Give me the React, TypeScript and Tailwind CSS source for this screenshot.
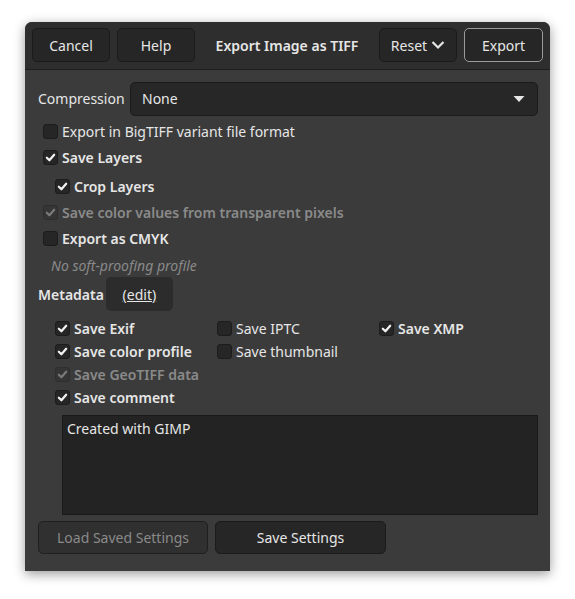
import React from "react";

const font = { fontFamily: '"Noto Sans", "Open Sans", sans-serif' };

function Check({ checked, disabled }: { checked?: boolean; disabled?: boolean }) {
  return (
    <div
      className={`w-[15px] h-[15px] rounded-[3px] border flex items-center justify-center shrink-0 ${
        disabled ? "bg-[#353535] border-[#2e2e2e]" : "bg-[#262626] border-[#1c1c1c]"
      }`}
    >
      {checked && (
        <svg width="11" height="11" viewBox="0 0 12 12">
          <path
            d="M2 6.2 L4.8 9 L10 3"
            fill="none"
            stroke={disabled ? "#7a7a7a" : "#f2f2f2"}
            strokeWidth="2.4"
            strokeLinecap="round"
            strokeLinejoin="round"
          />
        </svg>
      )}
    </div>
  );
}

function Row({
  label,
  checked,
  disabled,
  bold,
  className = "",
}: {
  label: string;
  checked?: boolean;
  disabled?: boolean;
  bold?: boolean;
  className?: string;
}) {
  return (
    <div className={`h-[23px] flex items-center gap-[4px] ${className}`}>
      <Check checked={checked} disabled={disabled} />
      <span
        className={`text-[14px] leading-none ${bold ? "font-semibold" : ""} ${
          disabled ? "text-[#8a8a8a]" : "text-[#e6e6e6]"
        }`}
      >
        {label}
      </span>
    </div>
  );
}

export default function App() {
  return (
    <div className="w-[575px] h-[599px] bg-white relative" style={font}>
      <div className="absolute left-[25px] top-[22px] w-[525px] h-[549px] rounded-t-[7px] bg-[#3b3b3b] shadow-[0_3px_12px_rgba(0,0,0,0.4)] flex flex-col overflow-hidden">
        {/* header */}
        <div className="h-[48px] bg-[#2e2e2e] border-b border-[#1f1f1f] flex items-center px-[7px] pb-[1px] shrink-0">
          <button className="w-[78px] h-[34px] rounded-[5px] bg-[#262626] border border-[#1b1b1b] text-[14px] text-[#e6e6e6]">
            Cancel
          </button>
          <button className="ml-[7px] w-[78px] h-[34px] rounded-[5px] bg-[#262626] border border-[#1b1b1b] text-[14px] text-[#e6e6e6]">
            Help
          </button>
          <div className="flex-1 text-center text-[14px] font-semibold text-[#e6e6e6]">Export Image as TIFF</div>
          <button className="w-[78px] h-[34px] rounded-[5px] bg-[#262626] border border-[#1b1b1b] text-[14px] text-[#e6e6e6] flex items-center justify-center gap-[4px]">
            Reset
            <svg width="14" height="10" viewBox="0 0 14 10">
              <path d="M1.5 2 L7 7.5 L12.5 2" fill="none" stroke="#e6e6e6" strokeWidth="2.2" />
            </svg>
          </button>
          <button className="ml-[7px] w-[79px] h-[34px] rounded-[5px] bg-[#262626] border border-[#9a9a9a] text-[14px] text-[#e6e6e6]">
            Export
          </button>
        </div>

        {/* body */}
        <div className="flex flex-col pl-[13px] pr-[12px] pt-[12px] text-[#e6e6e6]">
          <div className="flex items-center h-[34px]">
            <span className="text-[14px] w-[92px] -mt-[2px]">Compression</span>
            <div className="flex-1 h-[34px] rounded-[5px] bg-[#272727] border border-[#1b1b1b] flex items-center justify-between pl-[11px] pr-[12px]">
              <span className="text-[14px] -mt-[2px]">None</span>
              <svg width="12" height="8" viewBox="0 0 12 8">
                <path d="M0.5 1 L11.5 1 L6 7 Z" fill="#e6e6e6" />
              </svg>
            </div>
          </div>

          <div className="pl-[5px] mt-[4px] flex flex-col">
            <Row label="Export in BigTIFF variant file format" />
            <Row label="Save Layers" checked bold className="mt-[3px]" />
            <Row label="Crop Layers" checked bold className="mt-[6px] ml-[12px]" />
            <Row label="Save color values from transparent pixels" checked disabled bold className="mt-[3px]" />
            <Row label="Export as CMYK" bold className="mt-[3px]" />
            <div className="h-[23px] mt-[4px] flex items-center pl-[8px] text-[14px] italic text-[#8a8a8a]">
              No soft-proofing profile
            </div>
          </div>

          <div className="flex items-center h-[34px]">
            <span className="text-[14px] font-semibold">Metadata</span>
            <div className="ml-[2px] w-[67px] h-[34px] rounded-[5px] bg-[#2c2c2c] flex items-center justify-center text-[14px] underline">
              (edit)
            </div>
          </div>

          <div className="pl-[17px] mt-[6px] grid grid-cols-[162px_162px_1fr]">
            <Row label="Save Exif" checked bold />
            <Row label="Save IPTC" />
            <Row label="Save XMP" checked bold />
            <Row label="Save color profile" checked bold />
            <Row label="Save thumbnail" />
            <div />
            <Row label="Save GeoTIFF data" checked disabled bold />
            <div />
            <div />
            <Row label="Save comment" checked bold />
          </div>

          <div className="ml-[24px] mt-[6px] h-[100px] bg-[#232323] border border-[#1a1a1a] px-[4px] pt-[2px] text-[14px]">
            Created with GIMP
          </div>

          <div className="flex mt-[6px] gap-[7px]">
            <button className="w-[170px] h-[33px] rounded-[5px] bg-[#303030] border border-[#1f1f1f] text-[14px] text-[#8a8a8a]">
              Load Saved Settings
            </button>
            <button className="w-[171px] h-[33px] rounded-[5px] bg-[#262626] border border-[#1b1b1b] text-[14px] text-[#e6e6e6]">
              Save Settings
            </button>
          </div>
        </div>
      </div>
    </div>
  );
}
